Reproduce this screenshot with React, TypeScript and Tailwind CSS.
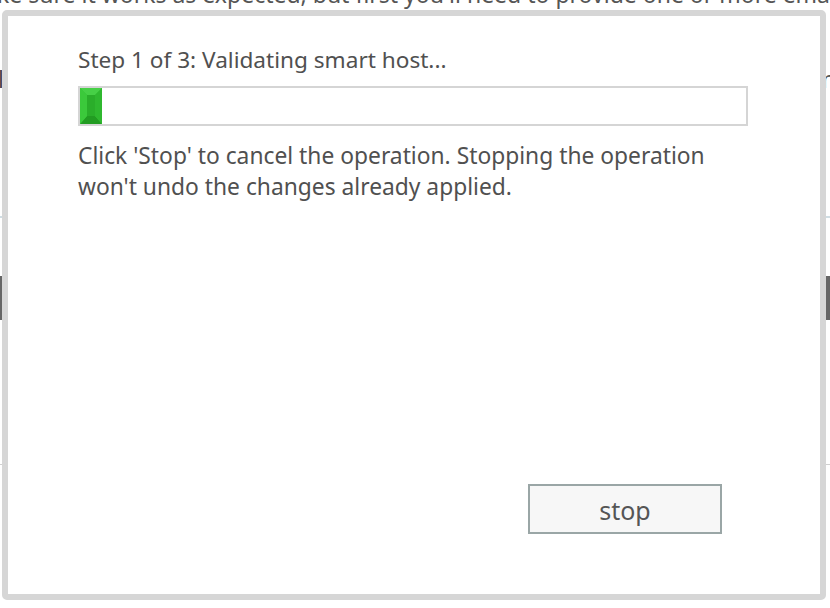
import React from 'react';

const font = { fontFamily: '"Noto Sans", "Open Sans", sans-serif' };

const ProgressChunk: React.FC = () => (
  <svg width="22" height="36" viewBox="0 0 22 36" className="block">
    <rect x="0" y="0" width="22" height="36" fill="#33c233" />
    {/* top bevel */}
    <polygon points="0,0 22,0 15,7 7,7" fill="#46d046" />
    {/* bottom bevel */}
    <polygon points="0,36 22,36 15,28 7,28" fill="#229c22" />
    {/* side bevels */}
    <polygon points="0,0 7,7 7,28 0,36" fill="#3bc93b" />
    <polygon points="22,0 15,7 15,28 22,36" fill="#2fb82f" />
    {/* inner bar */}
    <rect x="7" y="7" width="8" height="21" fill="#2aae2a" />
  </svg>
);

const App: React.FC = () => {
  return (
    <div className="relative w-[830px] h-[608px] overflow-hidden bg-white" style={font}>
      {/* Page behind the dialog */}
      <div className="flex flex-col text-[23px] text-[#555]">
        <div className="-mt-[21px] -ml-[3px] whitespace-nowrap leading-[30px]">
          ke sure it works as expected, but first you'll need to provide one or more email
        </div>
        <div className="mt-[60px] flex justify-between leading-[20px] h-[20px]">
          <span className="-ml-[2px] text-[#444]">l</span>
          <span className="-mr-[6px]">n</span>
        </div>
        <div className="mt-[127px] h-[2px] bg-[#d0dde3]" />
        <div className="mt-[58px] h-[44px] bg-[#666]" />
        <div className="mt-[144px] h-[1px] bg-[#d0d0d0]" />
      </div>

      {/* Dialog */}
      <div className="absolute left-[2px] top-[10px] w-[824px] h-[590px] rounded-[5px] border-[6px] border-[#d6d6d6] bg-white">
        <div className="flex flex-col h-full pl-[70px] pr-[72px] pt-[28px] text-[#505050]">
          <div className="text-[22.6px] leading-[32px]">Step 1 of 3: Validating smart host...</div>
          <div className="mt-[10px] w-[670px] h-[40px] border-2 border-[#d5d5d5] bg-white">
            <ProgressChunk />
          </div>
          <p className="mt-[14px] text-[22.8px] leading-[31px] w-[660px]">
            Click 'Stop' to cancel the operation. Stopping the operation won't undo the changes already applied.
          </p>
          <div className="flex-1" />
          <div className="flex justify-end pr-[26px] pb-[60px]">
            <button className="w-[194px] h-[50px] border-2 border-[#9aa6a6] bg-[#f7f7f7] text-[25px] text-[#555] leading-none pt-[3px]">
              stop
            </button>
          </div>
        </div>
      </div>
    </div>
  );
};

export default App;
